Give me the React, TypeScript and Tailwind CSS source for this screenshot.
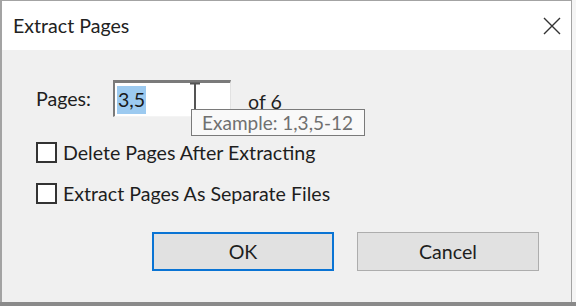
import React from "react";

const font = { fontFamily: "Lato, 'Noto Sans', sans-serif" };

const CheckRow = ({ label }: { label: string }) => (
  <label className="flex items-center h-[21px]">
    <span className="w-[21px] h-[21px] border-2 border-[#333] bg-white" />
    <span className="ml-[6px] text-[19.6px] text-[#1e1e1e] leading-none">{label}</span>
  </label>
);

export default function App() {
  return (
    <div
      className="relative w-[576px] h-[306px] flex flex-col bg-[#f5f5f5] border-b-4 border-[#8a8a8a] overflow-hidden"
      style={font}
    >
      <div className="flex-1 flex flex-col mr-[4px] border-l-2 border-t border-r border-[#a3a3a3] bg-[#f0f0f0]">
        {/* title bar */}
        <div className="h-[49px] bg-white flex items-center justify-between pl-[11px] pr-[10px]">
          <span className="text-[19.6px] text-[#222]">Extract Pages</span>
          <svg width="18" height="18" viewBox="0 0 18 18" fill="none">
            <path d="M1 1L17 17M17 1L1 17" stroke="#333" strokeWidth="1.4" />
          </svg>
        </div>

        {/* body */}
        <div className="flex flex-col pl-[34px] pr-[32px] pt-[30px]">
          <div className="flex items-center h-[37px]">
            <span className="w-[77px] text-[19.6px] text-[#1e1e1e]">Pages:</span>
            <div className="w-[118px] h-[37px] bg-white border-t-[3px] border-l-2 border-r border-b border-t-[#7a7a7a] border-l-[#7a7a7a] border-r-[#e2e2e2] border-b-[#f4f4f4] flex items-center pl-[2px]">
              <span className="bg-[#9ccaf0] text-[19.6px] text-[#1a1a1a] leading-[28px] px-[1px]">3,5</span>
            </div>
            <span className="ml-[17px] mt-[6px] text-[19.6px] leading-none text-[#1e1e1e]">of 6</span>
          </div>

          <div className="mt-[25px] flex flex-col gap-[20px]">
            <CheckRow label="Delete Pages After Extracting" />
            <CheckRow label="Extract Pages As Separate Files" />
          </div>

          <div className="mt-[28px] flex justify-end gap-[23px]">
            <button className="w-[182px] h-[39px] bg-[#e1e1e1] border-2 border-[#0a74d4] text-[19.6px] text-[#1e1e1e]">
              OK
            </button>
            <button className="w-[182px] h-[39px] bg-[#e1e1e1] border border-[#adadad] text-[19.6px] text-[#1e1e1e]">
              Cancel
            </button>
          </div>
        </div>
      </div>

      {/* text cursor */}
      <svg className="absolute left-[188px] top-[82px]" width="14" height="30" viewBox="0 0 14 30" fill="none">
        <path d="M2 1.5H12M7 1.5V30" stroke="#555" strokeWidth="2" />
      </svg>

      {/* tooltip */}
      <div className="absolute left-[191px] top-[109px] w-[174px] h-[27px] bg-[#f9f9f9] border border-[#7a7a7a] flex items-center pl-[10px]">
        <span className="text-[19px] text-[#707070] leading-none">Example: 1,3,5-12</span>
      </div>
    </div>
  );
}
